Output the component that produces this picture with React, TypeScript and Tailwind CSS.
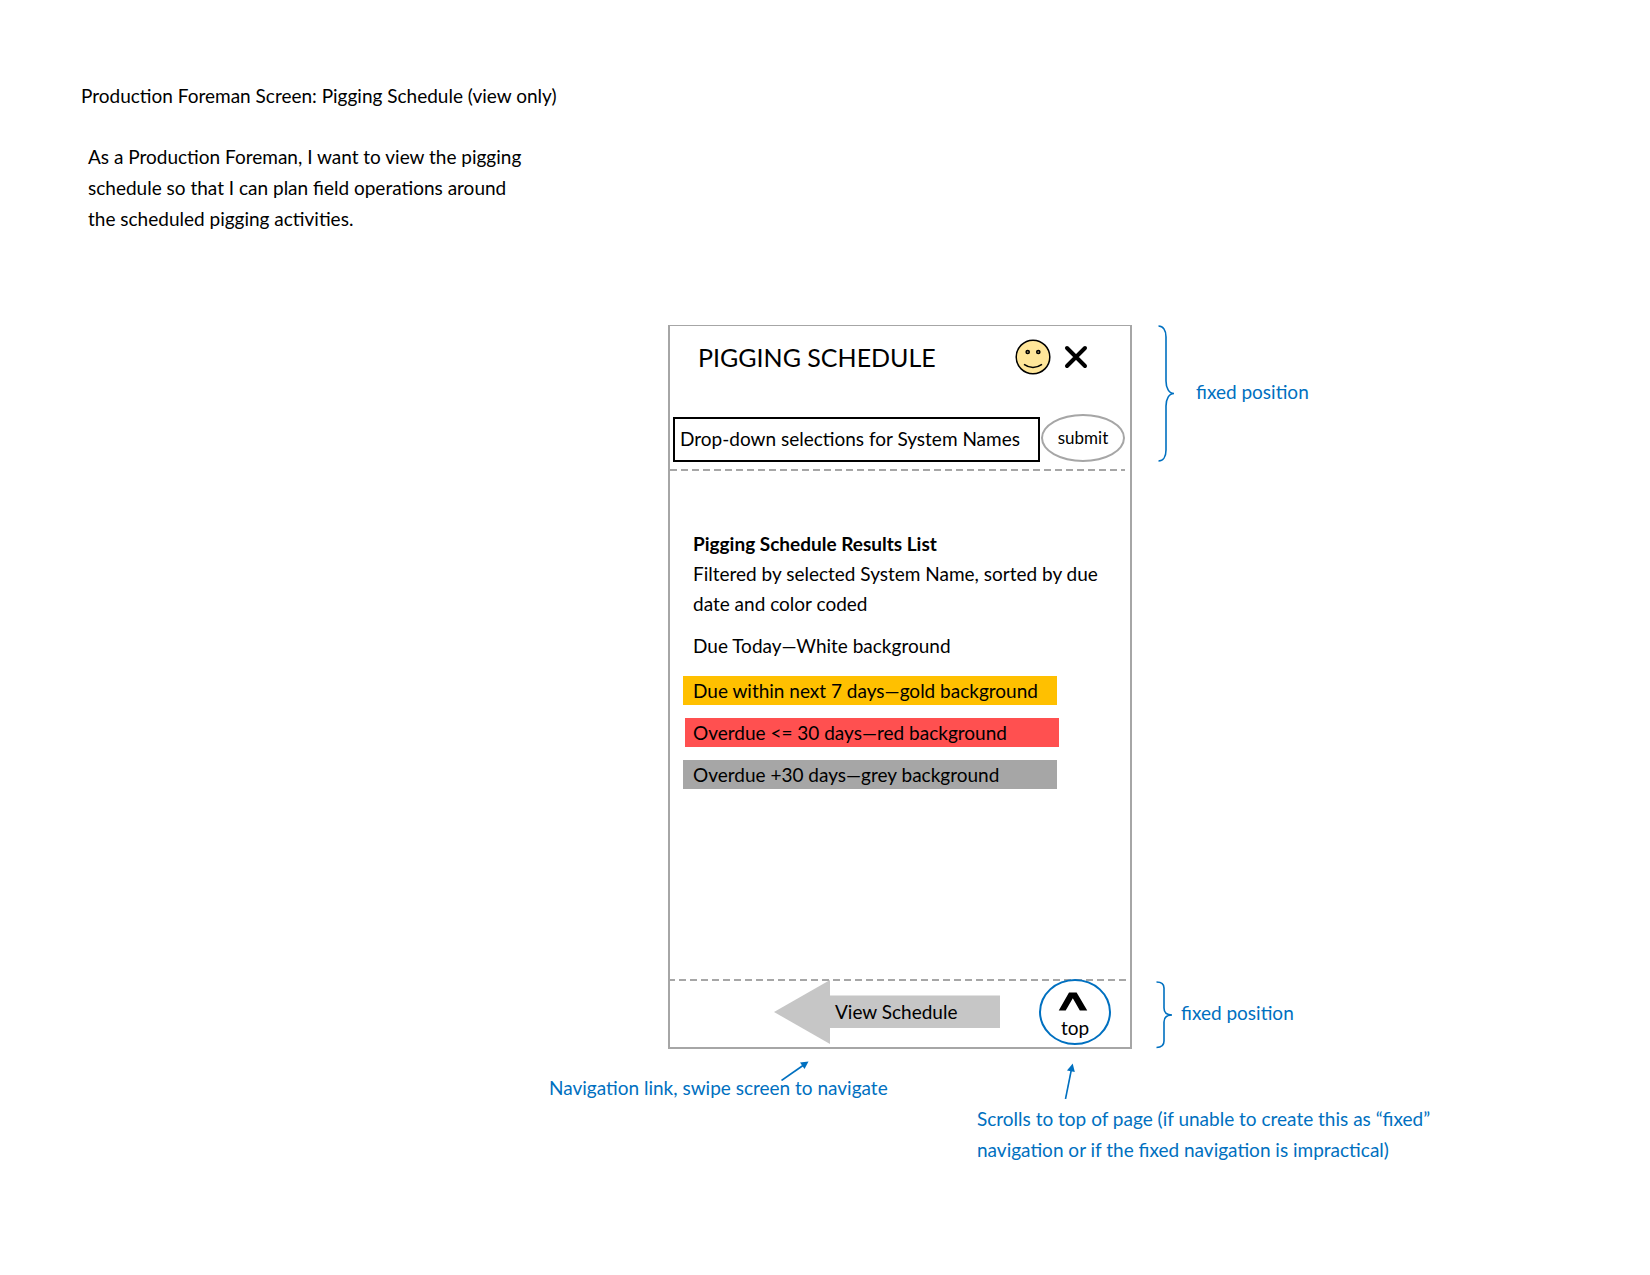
import React from "react";

const results = [
  { text: "Due within next 7 days—gold background", className: "ml-[13px] pl-[10px] bg-[#ffc000]" },
  { text: "Overdue <= 30 days—red background", className: "ml-[15px] pl-2 bg-[#ff5050]" },
  { text: "Overdue +30 days—grey background", className: "ml-[13px] pl-[10px] bg-[#a6a6a6]" },
];

function DashedLine() {
  return (
    <div className="h-[2px] bg-[repeating-linear-gradient(90deg,#a6a6a6_0_7px,transparent_7px_11px)]" />
  );
}

function Smiley() {
  return (
    <svg width="36" height="36" viewBox="0 0 36 36" fill="none" stroke="#000" strokeWidth="1.5" aria-hidden="true">
      <circle cx="18" cy="18" r="16.8" fill="#ffe699" />
      <circle cx="12.7" cy="13" r="1.6" fill="#a89a68" />
      <circle cx="23.3" cy="13" r="1.6" fill="#a89a68" />
      <path d="M9 25.3 Q18 31.5 27 25.3" />
    </svg>
  );
}

function TallBrace() {
  return (
    <svg width="17" height="137" viewBox="0 0 17 137" fill="none" stroke="#0070c0" strokeWidth="1.6" aria-hidden="true">
      <path d="M0.5 1 C5 1 8 5 8 12 V56 C8 63 11 68.5 16 68.5 C11 68.5 8 74 8 81 V125 C8 132 5 136 0.5 136" />
    </svg>
  );
}

function ShortBrace() {
  return (
    <svg width="17" height="68" viewBox="0 0 17 68" fill="none" stroke="#0070c0" strokeWidth="1.6" aria-hidden="true">
      <path d="M0.5 1 C5 1 8 2.5 8 7 V27 C8 32 11 34 16 34 C11 34 8 36 8 41 V60 C8 64.5 5 66.5 0.5 66.5" />
    </svg>
  );
}

export default function App() {
  return (
    <main className="min-h-screen bg-white pt-[81px] font-[Lato,sans-serif] text-[19px] leading-[30px] text-black">
      <header className="pl-[81px]">
        <h1>Production Foreman Screen: Pigging Schedule (view only)</h1>
        <p className="mt-[30px] ml-[7px] leading-[31px]">
          As a Production Foreman, I want to view the pigging
          <br />
          schedule so that I can plan field operations around
          <br />
          the scheduled pigging activities.
        </p>
      </header>

      <section className="mt-[91px] grid grid-cols-[minmax(0,549fr)_119px_464px_minmax(0,518fr)]">
        <div className="col-start-3 flex h-[724px] flex-col border-2 border-t border-[#a6a6a6]">
          <div className="flex items-center pt-[13px] pl-7">
            <h2 className="flex-1 text-[25px] leading-9">PIGGING SCHEDULE</h2>
            <Smiley />
            <button type="button" aria-label="Close" className="mr-[42px] ml-[13px]">
              <svg width="24" height="24" viewBox="0 0 24 24" stroke="#000" strokeWidth="4" strokeLinecap="round" aria-hidden="true">
                <path d="M3 3 L21 21 M21 3 L3 21" />
              </svg>
            </button>
          </div>

          <form className="mt-[39px] flex items-end pr-[5px] pl-[3px]" onSubmit={(e) => e.preventDefault()}>
            <select
              aria-label="System Names"
              className="h-[45px] min-w-0 flex-1 appearance-none rounded-none border-2 border-black bg-white pb-[2px] pl-[5px]"
            >
              <option>Drop-down selections for System Names</option>
            </select>
            <button type="submit" className="ml-px h-[48px] w-[84px] rounded-[50%] border-2 border-[#a6a6a6] text-[17px] leading-6">
              submit
            </button>
          </form>
          <div className="mt-[7px] pr-[5px]">
            <DashedLine />
          </div>

          <div className="mt-[58px] flex-1">
            <h3 className="pl-[23px] font-bold">Pigging Schedule Results List</h3>
            <p className="pl-[23px]">
              Filtered by selected System Name, sorted by due
              <br />
              date and color coded
            </p>
            <ul className="mt-3">
              <li className="pb-[2px] pl-[23px]">Due Today—White background</li>
              {results.map((r) => (
                <li key={r.text} className={`mt-[13px] w-[374px] leading-[29px] ${r.className}`}>
                  {r.text}
                </li>
              ))}
            </ul>
          </div>

          <div className="-mx-[2px]">
            <DashedLine />
          </div>
          <nav className="relative -mt-[2px] flex h-[68px] pl-[104px]">
            <a href="#schedule" className="grid h-[66px] w-[226px] grid-cols-1 grid-rows-1 items-center">
              <svg width="226" height="66" viewBox="0 0 226 66" fill="#c6c6c6" className="col-start-1 row-start-1" aria-hidden="true">
                <path d="M0 33 L56 1 V16.5 H226 V49 H56 V65 Z" />
              </svg>
              <span className="col-start-1 row-start-1 pl-[61px]">View Schedule</span>
            </a>
            <a
              href="#top"
              className="ml-[39px] flex h-[66px] w-[72px] flex-col items-center rounded-[50%] border-2 border-[#0070c0] bg-white pt-[11px]"
            >
              <svg width="30" height="20" viewBox="0 0 30 20" className="mr-1 mb-[2px]" aria-hidden="true">
                <path d="M0 19.5 L10.8 0.5 H18.8 L30 19.5 H22.2 L14.8 6.5 L7.3 19.5 Z" fill="#000" />
              </svg>
              <span>top</span>
            </a>
          </nav>
        </div>

        <div className="flex flex-col justify-between pl-6 text-[#0070c0]">
          <div className="flex items-center gap-[21px] pl-[2px]">
            <TallBrace />
            <span className="pb-1">fixed position</span>
          </div>
          <div className="flex items-center gap-2">
            <ShortBrace />
            <span className="pb-1">fixed position</span>
          </div>
        </div>

        <div className="col-span-3 col-start-2 flex gap-[82px] pt-3 text-[#0070c0]">
          <div className="w-[346px] shrink-0 whitespace-nowrap">
            <svg width="28" height="20" viewBox="0 0 28 20" className="-mb-2 ml-[232px] block" aria-hidden="true">
              <path d="M0.5 19.5 L22 4.5" stroke="#0070c0" strokeWidth="1.6" />
              <path d="M27.5 0.5 L23.5 8 L19 1.5 Z" fill="#0070c0" />
            </svg>
            <p>Navigation link, swipe screen to navigate</p>
          </div>
          <div className="flex-1 pt-[2px]">
            <svg width="14" height="36" viewBox="0 0 14 36" className="ml-[87px] block" aria-hidden="true">
              <path d="M1.5 36 L7.5 6" stroke="#0070c0" strokeWidth="1.6" />
              <path d="M8.7 0.5 L10.8 9 L3 7.6 Z" fill="#0070c0" />
            </svg>
            <p className="mt-1 leading-[31px]">
              Scrolls to top of page (if unable to create this as “fixed”
              <br />
              navigation or if the fixed navigation is impractical)
            </p>
          </div>
        </div>
      </section>
    </main>
  );
}
